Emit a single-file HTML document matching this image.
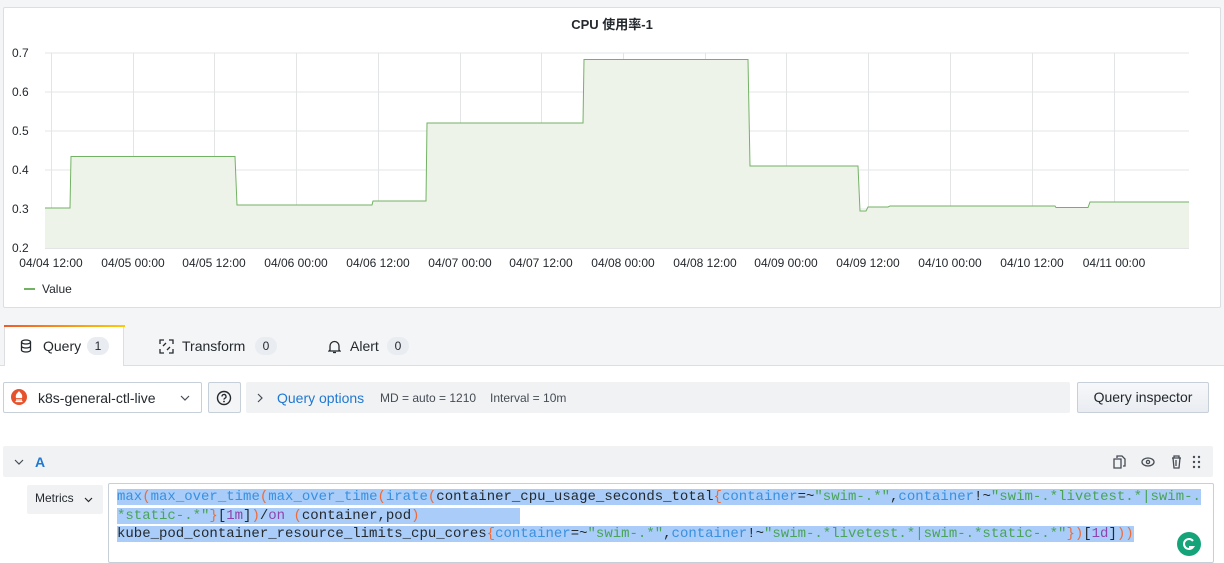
<!DOCTYPE html>
<html><head><meta charset="utf-8"><style>
body{margin:0;width:1224px;height:556px;overflow:hidden;background:#fff;font-family:"Liberation Sans","Noto Sans CJK SC",sans-serif;position:relative;color:#24292e}
.a{position:absolute}
.code{font-family:"Liberation Mono",monospace;font-size:14px;line-height:18.5px;white-space:pre;color:#24292e}
.code span.l{background:#a9cdf8}
.f{color:#3a8fde}.p{color:#f06a36}.s{color:#4aa356}.k{color:#8e44ad}
.lbl{font-size:12px;color:#24292e}
</style></head><body>
<div class="a" style="left:0;top:0;width:1224px;height:318px;background:#f4f5f6"></div>
<div class="a" style="left:3px;top:7px;width:1216px;height:299px;background:#fff;border:1px solid #dcdee1;border-radius:2px"></div>
<div class="a" style="left:0;top:14px;width:1224px;text-align:center;font-size:13px;font-weight:bold;color:#24292e">CPU 使用率-1</div>
<svg class="a" style="left:0;top:0" width="1224" height="310">
<g stroke="#e3e4e6" stroke-width="1">
<line x1="45" y1="53" x2="1189" y2="53"/><line x1="45" y1="92" x2="1189" y2="92"/><line x1="45" y1="131" x2="1189" y2="131"/><line x1="45" y1="170" x2="1189" y2="170"/><line x1="45" y1="209" x2="1189" y2="209"/><line x1="45" y1="248.5" x2="1189" y2="248.5"/>
<line x1="51.5" y1="53" x2="51.5" y2="248"/><line x1="133.5" y1="53" x2="133.5" y2="248"/><line x1="214.5" y1="53" x2="214.5" y2="248"/><line x1="296.5" y1="53" x2="296.5" y2="248"/><line x1="378.5" y1="53" x2="378.5" y2="248"/><line x1="460.5" y1="53" x2="460.5" y2="248"/><line x1="541.5" y1="53" x2="541.5" y2="248"/><line x1="623.5" y1="53" x2="623.5" y2="248"/><line x1="705.5" y1="53" x2="705.5" y2="248"/><line x1="786.5" y1="53" x2="786.5" y2="248"/><line x1="868.5" y1="53" x2="868.5" y2="248"/><line x1="950.5" y1="53" x2="950.5" y2="248"/><line x1="1032.5" y1="53" x2="1032.5" y2="248"/><line x1="1114.5" y1="53" x2="1114.5" y2="248"/>
</g>
<path d="M45 248 L45 208 L70 208 L71 156.5 L235 156.5 L237 205 L372 205 L373 201 L426 201 L427 123 L583 123 L584 59.5 L748 59.5 L750 166 L858 166 L860 211 L866 211 L868 207 L888 207 L890 206 L1055 206 L1056 207.5 L1088 207.5 L1090 202 L1189 202 L1189 248 Z" fill="#eef3ea" stroke="none"/>
<path d="M45 208 L70 208 L71 156.5 L235 156.5 L237 205 L372 205 L373 201 L426 201 L427 123 L583 123 L584 59.5 L748 59.5 L750 166 L858 166 L860 211 L866 211 L868 207 L888 207 L890 206 L1055 206 L1056 207.5 L1088 207.5 L1090 202 L1189 202" fill="none" stroke="#73b264" stroke-width="1"/>
<g font-family="Liberation Sans" font-size="12" fill="#24292e">
<text x="12" y="57">0.7</text><text x="12" y="96">0.6</text><text x="12" y="135">0.5</text><text x="12" y="174">0.4</text><text x="12" y="213">0.3</text><text x="12" y="252">0.2</text>
<g text-anchor="middle">
<text x="51" y="267">04/04 12:00</text><text x="133" y="267">04/05 00:00</text><text x="214" y="267">04/05 12:00</text><text x="296" y="267">04/06 00:00</text><text x="378" y="267">04/06 12:00</text><text x="460" y="267">04/07 00:00</text><text x="541" y="267">04/07 12:00</text><text x="623" y="267">04/08 00:00</text><text x="705" y="267">04/08 12:00</text><text x="786" y="267">04/09 00:00</text><text x="868" y="267">04/09 12:00</text><text x="950" y="267">04/10 00:00</text><text x="1032" y="267">04/10 12:00</text><text x="1114" y="267">04/11 00:00</text>
</g>
<text x="42" y="293">Value</text>
</g>
<rect x="24" y="288" width="11" height="2" fill="#73b264"/>
</svg>
<!-- tabs -->
<div class="a" style="left:0;top:318px;width:1224px;height:47px;background:#f4f5f6;border-bottom:1px solid #dcdee1"></div>
<div class="a" style="left:4px;top:325px;width:120px;height:41px;background:#fff;border:1px solid #dcdee1;border-bottom:none;box-sizing:border-box"></div>
<div class="a" style="left:4px;top:325px;width:121px;height:2px;background:linear-gradient(90deg,#f05a28,#fbca0a)"></div>
<svg class="a" style="left:20px;top:339px" width="12" height="14"><g fill="none" stroke="#24292e" stroke-width="1.3"><ellipse cx="6" cy="3" rx="4.5" ry="2"/><path d="M1.5 3v8c0 1.2 2 2 4.5 2s4.5-.8 4.5-2V3M1.5 7c0 1.2 2 2 4.5 2s4.5-.8 4.5-2"/></g></svg>
<div class="a" style="left:43px;top:338px;font-size:14px">Query</div>
<div class="a" style="left:87px;top:337px;width:22px;height:18px;border-radius:9px;background:#e9ecf1;font-size:12px;text-align:center;line-height:18px">1</div>
<svg class="a" style="left:159px;top:339px" width="15" height="15"><g fill="none" stroke="#24292e" stroke-width="1.3"><path d="M1 5V1h4M10 1h4v4M14 10v4h-4M5 14H1v-4"/><path d="M4 7l3-3M11 8l-3 3"/></g></svg>
<div class="a" style="left:182px;top:338px;font-size:14px">Transform</div>
<div class="a" style="left:255px;top:337px;width:22px;height:18px;border-radius:9px;background:#e9ecf1;font-size:12px;text-align:center;line-height:18px">0</div>
<svg class="a" style="left:328px;top:339px" width="13" height="15"><g fill="none" stroke="#24292e" stroke-width="1.3"><path d="M2 11V7a4.5 4.5 0 0 1 9 0v4l1 1H1z"/><path d="M5 13.5h3"/></g></svg>
<div class="a" style="left:350px;top:338px;font-size:14px">Alert</div>
<div class="a" style="left:387px;top:337px;width:22px;height:18px;border-radius:9px;background:#e9ecf1;font-size:12px;text-align:center;line-height:18px">0</div>
<!-- row -->
<div class="a" style="left:3px;top:382px;width:199px;height:31px;border:1px solid #c7d0d9;border-radius:2px;box-sizing:border-box;background:#fff"></div>
<svg class="a" style="left:11px;top:389px" width="16" height="16"><circle cx="8" cy="8" r="8" fill="#e6522c"/><path d="M5 11h6M4.5 12.5h7M8 3c2 2 3 3 2.5 5.5h-5C5 6 6 5 8 3z" stroke="#fff" stroke-width="1.2" fill="#fff"/></svg>
<div class="a" style="left:38px;top:390px;font-size:14px">k8s-general-ctl-live</div>
<svg class="a" style="left:180px;top:395px" width="10" height="6"><path d="M1 1l4 4 4-4" fill="none" stroke="#464c54" stroke-width="1.2"/></svg>
<div class="a" style="left:208px;top:382px;width:33px;height:31px;border:1px solid #c7d0d9;border-radius:2px;box-sizing:border-box;background:#f4f5f6"></div>
<svg class="a" style="left:216px;top:390px" width="16" height="16"><circle cx="8" cy="8" r="6.5" fill="none" stroke="#24292e" stroke-width="1.4"/><path d="M6 6.5a2 2 0 1 1 2.8 1.8c-.6.3-.8.6-.8 1.3" fill="none" stroke="#24292e" stroke-width="1.3"/><circle cx="8" cy="11.5" r=".9" fill="#24292e"/></svg>
<div class="a" style="left:246px;top:382px;width:824px;height:31px;background:#f1f2f4;border-radius:2px"></div>
<svg class="a" style="left:257px;top:393px" width="6" height="10"><path d="M1 1l4 4-4 4" fill="none" stroke="#464c54" stroke-width="1.2"/></svg>
<div class="a" style="left:277px;top:390px;font-size:14px;color:#1f78d1;font-weight:500">Query options</div>
<div class="a" style="left:380px;top:391px;font-size:12px;color:#464c54">MD = auto = 1210</div>
<div class="a" style="left:490px;top:391px;font-size:12px;color:#464c54">Interval = 10m</div>
<div class="a" style="left:1077px;top:382px;width:132px;height:31px;border:1px solid #c7d0d9;border-radius:2px;box-sizing:border-box;background:linear-gradient(#f7f8fa,#e9ecf1);font-size:14px;text-align:center;line-height:29px;font-weight:500">Query inspector</div>
<!-- query A -->
<div class="a" style="left:3px;top:446px;width:1210px;height:31px;background:#f1f2f4;border-radius:2px"></div>
<svg class="a" style="left:14px;top:459px" width="10" height="6"><path d="M1 1l4 4 4-4" fill="none" stroke="#464c54" stroke-width="1.2"/></svg>
<div class="a" style="left:35px;top:454px;font-size:14px;color:#1f78d1;font-weight:bold">A</div>
<svg class="a" style="left:1112px;top:454px" width="100" height="16"><g fill="none" stroke="#464c54" stroke-width="1.3"><path d="M5 4V2h5l3 3v7h-2M2 5h7v9H2z"/><ellipse cx="36" cy="8" rx="6" ry="4"/><circle cx="36" cy="8" r="1.6"/><path d="M60 4h9M62 4V2h5v2M61 4l1 10h5l1-10M64 6v6"/></g><g fill="#464c54"><circle cx="82" cy="3" r="1.2"/><circle cx="87" cy="3" r="1.2"/><circle cx="82" cy="8" r="1.2"/><circle cx="87" cy="8" r="1.2"/><circle cx="82" cy="13" r="1.2"/><circle cx="87" cy="13" r="1.2"/></g></svg>
<div class="a" style="left:27px;top:485px;width:76px;height:29px;background:#f1f2f4;border-radius:2px"></div>
<div class="a" style="left:35px;top:491px;font-size:12px;font-weight:500">Metrics</div>
<svg class="a" style="left:84px;top:497px" width="9" height="6"><path d="M1 1l3.5 3.5L8 1" fill="none" stroke="#24292e" stroke-width="1.2"/></svg>
<div class="a" style="left:108px;top:483px;width:1106px;height:80px;border:1px solid #c7d0d9;border-radius:2px;box-sizing:border-box"></div>
<div class="a code" style="left:117px;top:488px"><span class="l"><span class="f">max</span><span class="p">(</span><span class="f">max_over_time</span><span class="p">(</span><span class="f">max_over_time</span><span class="p">(</span><span class="f">irate</span><span class="p">(</span>container_cpu_usage_seconds_total<span class="p">{</span><span class="f">container</span>=~<span class="s">"swim-.*"</span>,<span class="f">container</span>!~<span class="s">"swim-.*livetest.*|swim-.</span></span>
<span class="l"><span class="s">*static-.*"</span><span class="p">}</span>[<span class="k">1m</span>]<span class="p">)</span>/<span class="k">on</span> <span class="p">(</span>container,pod<span class="p">)</span>            </span>
<span class="l">kube_pod_container_resource_limits_cpu_cores<span class="p">{</span><span class="f">container</span>=~<span class="s">"swim-.*"</span>,<span class="f">container</span>!~<span class="s">"swim-.*livetest.*|swim-.*static-.*"</span><span class="p">})</span>[<span class="k">1d</span>]<span class="p">))</span></span></div>
<div class="a" style="left:1177px;top:532px;width:24px;height:24px;border-radius:12px;background:#15a47a"></div>
<svg class="a" style="left:1181px;top:536px" width="16" height="16"><path d="M12 5a5 5 0 1 0 0 6h-4" fill="none" stroke="#fff" stroke-width="2"/></svg>
</body></html>
